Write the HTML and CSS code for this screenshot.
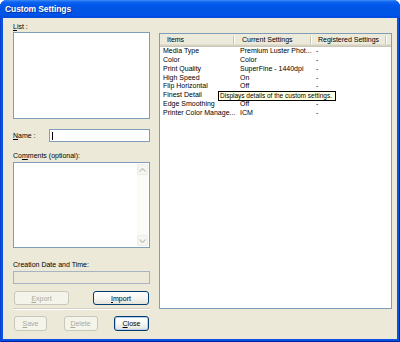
FILE: index.html
```html
<!DOCTYPE html>
<html>

<head>
  <meta charset="UTF-8">
  <link rel="stylesheet" href="styles.css">
</head>

<body>
  <div class="window">
    <div class="titlebar">
      <span class="title">Custom Settings</span>
    </div>

    <div class="client">
      <div class="panel">
        <div class="label"><u>L</u>ist :</div>
        <div class="listbox"></div>

        <div class="name-row">
          <div class="label name-label"><u>N</u>ame :</div>
          <div class="textbox"><span class="caret"></span></div>
        </div>

        <div class="label comments-label">Co<u>m</u>ments (optional):</div>
        <div class="memo">
          <div class="vscroll">
            <span class="arrow">
              <svg width="7" height="4" viewBox="0 0 7 4"><path d="M0.5 3.5 L3.5 0.5 L6.5 3.5" fill="none" stroke="#C9C7BA" stroke-width="1.2"/></svg>
            </span>
            <span class="arrow">
              <svg width="7" height="4" viewBox="0 0 7 4"><path d="M0.5 0.5 L3.5 3.5 L6.5 0.5" fill="none" stroke="#C9C7BA" stroke-width="1.2"/></svg>
            </span>
          </div>
        </div>

        <div class="label date-label">Creation Date and Time:</div>
        <div class="textbox readonly"></div>

        <div class="btn-row">
          <button class="btn btn-export" disabled><u>E</u>xport</button>
          <button class="btn btn-import"><u>I</u>mport</button>
        </div>

        <div class="separator"></div>

        <div class="btn-row bottom-row">
          <button class="btn btn-save" disabled><u>S</u>ave</button>
          <button class="btn btn-delete" disabled><u>D</u>elete</button>
          <button class="btn btn-close btn-default"><u>C</u>lose</button>
        </div>
      </div>

      <div class="listview">
        <div class="lv-head">
          <div class="lv-col">Items</div>
          <div class="lv-col">Current Settings</div>
          <div class="lv-col lv-col-last">Registered Settings</div>
          <div class="lv-col lv-col-rest"></div>
        </div>

        <div class="lv-row"><span>Media Type</span><span>Premium Luster Phot...</span><span>-</span></div>
        <div class="lv-row"><span>Color</span><span>Color</span><span>-</span></div>
        <div class="lv-row"><span>Print Quality</span><span>SuperFine - 1440dpi</span><span>-</span></div>
        <div class="lv-row"><span>High Speed</span><span>On</span><span>-</span></div>
        <div class="lv-row"><span>Flip Horizontal</span><span>Off</span><span>-</span></div>
        <div class="lv-row"><span>Finest Detail</span><span></span><span></span></div>
        <div class="lv-row"><span>Edge Smoothing</span><span>Off</span><span>-</span></div>
        <div class="lv-row"><span>Printer Color Manage...</span><span>ICM</span><span>-</span></div>

        <div class="tooltip">Displays details of the custom settings.</div>
      </div>
    </div>
  </div>
</body>

</html>
```

FILE: styles.css
```css
body {
  margin: 0;
  background: #ffffff;
  font-family: 'Liberation Sans', Arial, sans-serif;
  font-size: 7px;
  color: #000;
}

.window {
  width: 400px;
  height: 342px;
  box-sizing: border-box;
  display: flex;
  flex-direction: column;
  background: #0A53E2;
  border-radius: 7px 7px 0 0;
  overflow: hidden;
  box-shadow: inset 1px 0 #0842D0, inset -1px 0 #0026C4, inset 0 -1px #001EA0;
}

.titlebar {
  height: 18px;
  flex: none;
  display: flex;
  align-items: center;
  padding-left: 5px;
  background: linear-gradient(to bottom, #3D8DF5 0, #0F64EE 2px, #0058EE 5px, #0054E3 50%, #0055EA 80%, #0048DC 100%);
}

.title {
  color: white;
  font-weight: bold;
  font-size: 8.5px;
  letter-spacing: -0.1px;
  text-shadow: 1px 1px 0 #0A2C9C;
}

.client {
  flex: 1;
  margin: 0 3px 3px;
  padding: 4px 5px 0 10px;
  display: flex;
  gap: 9px;
  background: #ECE9D8;
}

.panel {
  width: 137px;
  flex: none;
  display: flex;
  flex-direction: column;
}

.label {
  height: 9px;
  line-height: 9px;
  white-space: nowrap;
}

.listbox {
  margin-top: 1px;
  height: 87px;
  box-sizing: border-box;
  border: 1px solid #7F9DB9;
  background: white;
}

.name-row {
  margin-top: 10px;
  height: 13px;
  display: flex;
  align-items: center;
}

.name-label {
  width: 36px;
  flex: none;
}

.textbox {
  flex: 1;
  height: 13px;
  box-sizing: border-box;
  border: 1px solid #7F9DB9;
  background: white;
  padding: 2px 1px;
}

.caret {
  display: block;
  width: 1px;
  height: 8px;
  margin-left: 1px;
  background: #000;
}

.comments-label {
  margin-top: 9px;
}

.memo {
  margin-top: 2px;
  height: 86px;
  box-sizing: border-box;
  border: 1px solid #7F9DB9;
  background: white;
  display: flex;
  justify-content: flex-end;
  padding: 1px;
}

.vscroll {
  width: 11px;
  display: flex;
  flex-direction: column;
  justify-content: space-between;
  background: #FAFAF6;
}

.arrow {
  height: 11px;
  box-sizing: border-box;
  border: 1px solid #EEEDE5;
  border-radius: 2px;
  background: #F6F5F0;
  display: flex;
  align-items: center;
  justify-content: center;
}

.date-label {
  margin-top: 12px;
}

.readonly {
  flex: none;
  margin-top: 2px;
  background: #ECE9D8;
  border-color: #A8B4C4;
}

.btn-row {
  margin-top: 7px;
  padding: 0 1px;
  display: flex;
  justify-content: space-between;
}

.btn {
  height: 14px;
  box-sizing: border-box;
  padding: 0;
  font: inherit;
  color: #000;
  border: 1px solid #003C74;
  border-radius: 3px;
  background: linear-gradient(to bottom, #FFFFFF 0%, #F5F5F1 55%, #E4E2D9 100%);
}

.btn:disabled {
  color: #ACA899;
  border-color: #C9C7BA;
  background: #F5F4EA;
}

.btn-default {
  box-shadow: inset 0 0 0 1px #B9CEF3;
}

.btn-export {
  width: 55px;
}

.btn-import {
  width: 56px;
}

.separator {
  margin-top: 3px;
  border-top: 1px solid #D3D0C3;
  border-bottom: 1px solid #ffffff;
}

.bottom-row {
  margin-top: 6px;
}

.bottom-row .btn {
  height: 15px;
}

.btn-save {
  width: 33px;
}

.btn-delete {
  width: 34px;
}

.btn-close {
  width: 35px;
}

/* list view */
.listview {
  position: relative;
  margin-top: 11px;
  width: 233px;
  height: 276px;
  flex: none;
  box-sizing: border-box;
  border: 1px solid #7F9DB9;
  background: white;
}

.lv-head,
.lv-row {
  display: grid;
  grid-template-columns: 75px 77px 75px 1fr;
}

.lv-head {
  height: 13px;
  background: #EBEADB;
  box-shadow: inset 0 -1px #CBC7B8, inset 0 -2px #D6D2C2, inset 0 -3px #E2DECD;
}

.lv-col {
  position: relative;
  line-height: 12px;
  padding-left: 7px;
  white-space: nowrap;
}

.lv-col-last {
  padding-left: 6px;
}

.lv-col::after {
  content: "";
  position: absolute;
  right: 1px;
  top: 2px;
  bottom: 3px;
  width: 1px;
  background: #C7C5B2;
  box-shadow: 1px 0 #ffffff;
}

.lv-col-rest::after {
  display: none;
}

.lv-row {
  height: 8.86px;
  line-height: 8.86px;
  white-space: nowrap;
}

.lv-row span {
  overflow: hidden;
}

.lv-row span:nth-child(1) {
  padding-left: 3px;
}

.lv-row span:nth-child(2) {
  padding-left: 5px;
}

.lv-row span:nth-child(3) {
  padding-left: 4px;
}

.tooltip {
  position: absolute;
  left: 58px;
  top: 57px;
  width: 118px;
  height: 10px;
  box-sizing: border-box;
  padding: 0 1px;
  font-size: 6.5px;
  line-height: 8px;
  white-space: nowrap;
  overflow: hidden;
  border: 1px solid #000;
  background: #FFFFE1;
}
```
